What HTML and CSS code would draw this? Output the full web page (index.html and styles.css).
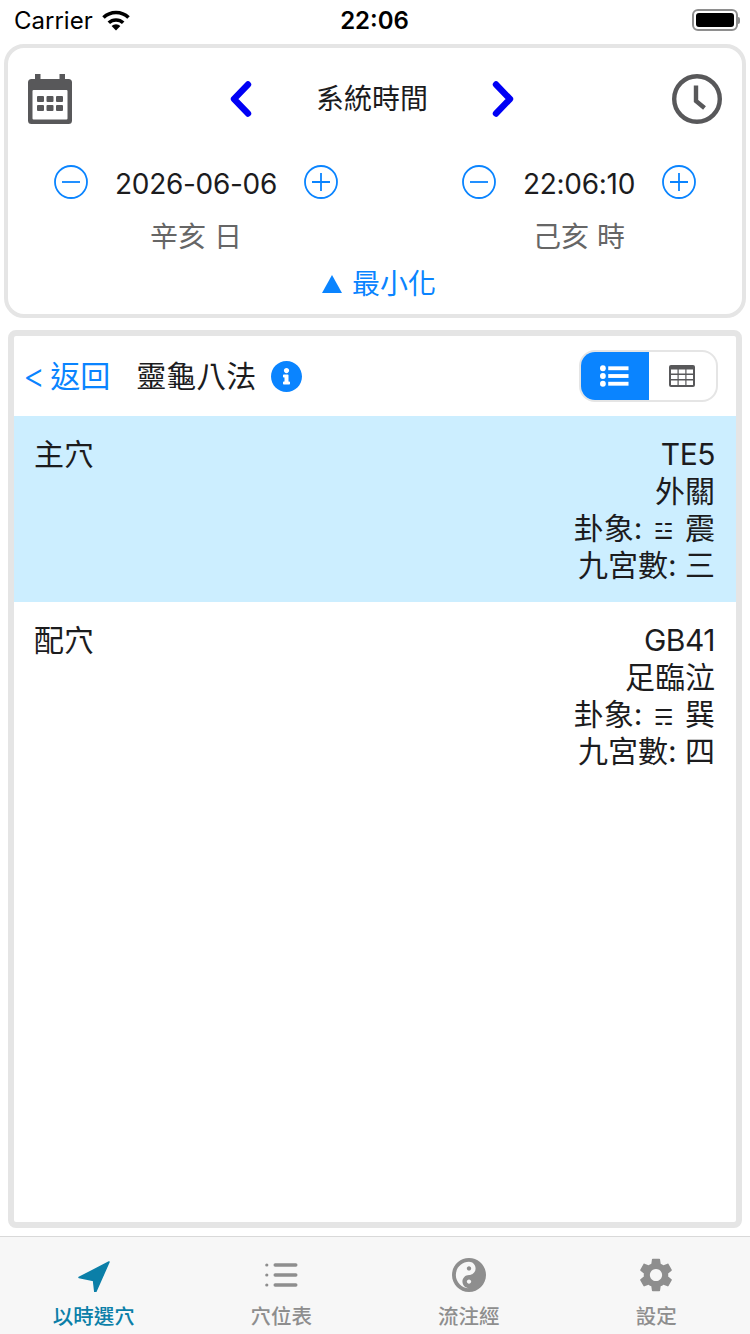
FILE: index.html
```html
<!DOCTYPE html>
<html lang="zh-Hant">
<head>
<meta charset="utf-8">
<title>靈龜八法</title>
<link rel="stylesheet" href="styles.css">
</head>
<body>
<div class="status">
  <div class="status-left">
    <span class="carrier">Carrier</span>
    <svg class="wifi" viewBox="0 0 30 22"><path class="wifi-arc" d="M2.500 8.500A18 18 0 0 1 27.500 8.500"/><path class="wifi-arc" d="M7.800 13.800A10.500 10.500 0 0 1 22.200 13.800"/><path d="M15 21.500 10.600 17A6.300 6.300 0 0 1 19.400 17z"/></svg>
  </div>
  <span class="clock-text">22:06</span>
  <div class="status-right">
    <span class="battery"><span class="battery-fill"></span></span><span class="battery-cap"></span>
  </div>
</div>

<section class="time-card">
  <div class="nav-row">
    <svg class="cal-icon" viewBox="0 0 44 50"><path class="ic-dark" d="M7 0h5.500v5h19V0H37v5h3.500A3.500 3.500 0 0 1 44 8.500V46.500A3.500 3.500 0 0 1 40.500 50H3.500A3.500 3.500 0 0 1 0 46.500V8.500A3.500 3.500 0 0 1 3.500 5H7z"/><rect class="ic-white" x="4.500" y="16" width="35" height="29.500" rx="1"/><g class="ic-dark"><rect x="9" y="22" width="7" height="6" rx="1"/><rect x="18.500" y="22" width="7" height="6" rx="1"/><rect x="28" y="22" width="7" height="6" rx="1"/><rect x="9" y="31" width="7" height="6" rx="1"/><rect x="18.500" y="31" width="7" height="6" rx="1"/><rect x="28" y="31" width="7" height="6" rx="1"/></g></svg>
    <div class="nav-center">
      <svg class="chev" viewBox="0 0 22 36"><path d="M18 3.500 4 18l14 14.500"/></svg>
      <span class="nav-title">系統時間</span>
      <svg class="chev" viewBox="0 0 22 36"><path d="M4 3.500 18 18 4 32.500"/></svg>
    </div>
    <svg class="clock-icon" viewBox="0 0 50 50"><circle cx="25" cy="25" r="22.800"/><path d="M24 11.500v15.500l8.500 7"/></svg>
  </div>

  <div class="date-row">
    <div class="date-block">
      <div class="stepper">
        <svg class="step" viewBox="0 0 34 34"><circle cx="17" cy="17" r="16"/><path d="M8 17h18"/></svg>
        <span class="step-val">2026-06-06</span>
        <svg class="step" viewBox="0 0 34 34"><circle cx="17" cy="17" r="16"/><path d="M8 17h18M17 8v18"/></svg>
      </div>
      <div class="ganzhi">辛亥 日</div>
    </div>
    <div class="date-block">
      <div class="stepper">
        <svg class="step" viewBox="0 0 34 34"><circle cx="17" cy="17" r="16"/><path d="M8 17h18"/></svg>
        <span class="step-val">22:06:10</span>
        <svg class="step" viewBox="0 0 34 34"><circle cx="17" cy="17" r="16"/><path d="M8 17h18M17 8v18"/></svg>
      </div>
      <div class="ganzhi">己亥 時</div>
    </div>
  </div>
  <div class="minimize"><span class="tri"></span>最小化</div>
</section>

<main class="result-card">
  <header class="result-head">
    <span class="back"><span class="lt">&lt;</span><span>返回</span></span>
    <h1 class="result-title">靈龜八法</h1>
    <svg class="info" viewBox="8 8 496 496"><path d="M256 8C119.043 8 8 119.083 8 256c0 136.997 111.043 248 248 248s248-111.003 248-248C504 119.083 392.957 8 256 8zm0 110c23.196 0 42 18.804 42 42s-18.804 42-42 42-42-18.804-42-42 18.804-42 42-42zm56 254c0 6.627-5.373 12-12 12h-88c-6.627 0-12-5.373-12-12v-24c0-6.627 5.373-12 12-12h12v-64h-12c-6.627 0-12-5.373-12-12v-24c0-6.627 5.373-12 12-12h64c6.627 0 12 5.373 12 12v100h12c6.627 0 12 5.373 12 12v24z"/></svg>
    <div class="segment">
      <div class="seg seg-on">
        <svg class="seg-list" viewBox="0 0 30 22"><g class="fill-white"><circle cx="3" cy="3" r="3"/><circle cx="3" cy="11" r="3"/><circle cx="3" cy="19" r="3"/><rect x="8.500" y="1" width="21" height="4"/><rect x="8.500" y="9" width="21" height="4"/><rect x="8.500" y="17" width="21" height="4"/></g></svg>
      </div>
      <div class="seg">
        <svg class="seg-table" viewBox="0 0 26 22"><rect x="0" y="0" width="26" height="22" rx="2" class="ic-dark"/><g class="ic-white"><rect x="2" y="4.500" width="6.500" height="4"/><rect x="9.700" y="4.500" width="6.600" height="4"/><rect x="17.500" y="4.500" width="6.500" height="4"/><rect x="2" y="10" width="6.500" height="4"/><rect x="9.700" y="10" width="6.600" height="4"/><rect x="17.500" y="10" width="6.500" height="4"/><rect x="2" y="15.500" width="6.500" height="4.500"/><rect x="9.700" y="15.500" width="6.600" height="4.500"/><rect x="17.500" y="15.500" width="6.500" height="4.500"/></g></svg>
      </div>
    </div>
  </header>
  <div class="row row-main">
    <div class="row-label">主穴</div>
    <div class="row-data">
      <div class="latin">TE5</div>
      <div>外關</div>
      <div>卦象: <span class="gua">☳</span> 震</div>
      <div>九宮數: 三</div>
    </div>
  </div>
  <div class="row">
    <div class="row-label">配穴</div>
    <div class="row-data">
      <div class="latin">GB41</div>
      <div>足臨泣</div>
      <div>卦象: <span class="gua">☴</span> 巽</div>
      <div>九宮數: 四</div>
    </div>
  </div>
</main>

<nav class="tabbar">
  <div class="tab tab-on">
    <svg class="tab-icon" viewBox="0 0 34 34"><path class="arrow" d="M32 4 2 19.500l14.500 3 1.500 13z"/></svg>
    <span class="tab-label">以時選穴</span>
  </div>
  <div class="tab">
    <svg class="tab-icon" viewBox="0 0 34 34"><g class="fill-gray"><circle cx="2.800" cy="7" r="1.600"/><circle cx="2.800" cy="17" r="1.600"/><circle cx="2.800" cy="27" r="1.600"/><rect x="9.500" y="5.300" width="24" height="3.400" rx="1.700"/><rect x="9.500" y="15.300" width="24" height="3.400" rx="1.700"/><rect x="9.500" y="25.300" width="24" height="3.400" rx="1.700"/></g></svg>
    <span class="tab-label">穴位表</span>
  </div>
  <div class="tab">
    <svg class="tab-icon" viewBox="0 0 496 496"><path class="fill-gray" d="M248 0C111.030 0 0 111.030 0 248s111.030 248 248 248 248-111.030 248-248S384.970 0 248 0zm0 376c-17.670 0-32-14.330-32-32s14.330-32 32-32 32 14.330 32 32-14.330 32-32 32zm0-128c-53.020 0-96 42.980-96 96s42.980 96 96 96c-106.040 0-192-85.960-192-192S141.960 56 248 56c53.020 0 96 42.980 96 96s-42.980 96-96 96zm0-128c-17.670 0-32 14.330-32 32s14.330 32 32 32 32-14.330 32-32-14.330-32-32-32z"/></svg>
    <span class="tab-label">流注經</span>
  </div>
  <div class="tab">
    <svg class="tab-icon" viewBox="2.500 2 19 20"><path class="fill-gray" d="M19.140 12.940c.04-.3.06-.61.06-.94 0-.32-.02-.64-.07-.94l2.030-1.580c.18-.14.23-.41.12-.61l-1.920-3.320c-.12-.22-.37-.29-.59-.22l-2.390.96c-.5-.38-1.030-.7-1.620-.94l-.36-2.540c-.04-.24-.24-.41-.48-.41h-3.840c-.24 0-.43.17-.47.41l-.36 2.540c-.59.24-1.130.57-1.620.94l-2.390-.96c-.22-.08-.47 0-.59.22L2.740 8.870c-.12.21-.08.47.12.61l2.030 1.580c-.05.3-.09.63-.09.94s.02.64.07.94l-2.030 1.580c-.18.14-.23.41-.12.61l1.920 3.320c.12.22.37.29.59.22l2.390-.96c.5.38 1.030.7 1.620.94l.36 2.540c.05.24.24.41.48.41h3.840c.24 0 .44-.17.47-.41l.36-2.540c.59-.24 1.130-.56 1.620-.94l2.390.96c.22.08.47 0 .59-.22l1.920-3.320c.12-.22.07-.47-.12-.61l-2.010-1.580zM12 15.600c-1.980 0-3.600-1.620-3.600-3.600s1.620-3.600 3.600-3.600 3.600 1.620 3.600 3.600-1.620 3.600-3.600 3.600z"/></svg>
    <span class="tab-label">設定</span>
  </div>
</nav>
</body>
</html>
```
FILE: styles.css
```css
* { box-sizing: border-box; }
html, body { margin: 0; padding: 0; }
body {
  width: 750px;
  height: 1334px;
  display: flex;
  flex-direction: column;
  background: #fff;
  color: #1c1c1e;
  font-family: Inter, "Noto Sans CJK TC", "DejaVu Sans", sans-serif;
  overflow: hidden;
}
.ic-dark { fill: #58585a; }
.ic-white { fill: #fff; }
.fill-white { fill: #fff; }
.fill-gray { fill: #8e8e8e; }

.status {
  height: 44px;
  flex: none;
  display: grid;
  grid-template-columns: 1fr auto 1fr;
  align-items: center;
  padding: 0 12px 4px 14px;
  color: #000;
}
.status-left { display: flex; align-items: center; gap: 8px; }
.carrier { font-size: 24px; }
.wifi { width: 30px; height: 22px; fill: #000; }
.wifi-arc { fill: none; stroke: #000; stroke-width: 3.600px; }
.clock-text { font-size: 24px; font-weight: 600; margin-left: -3px; }
.status-right { display: flex; justify-content: flex-end; align-items: center; }
.battery {
  width: 46px;
  height: 22px;
  border: 2px solid #8e8e8e;
  border-radius: 6px;
  padding: 2px;
  display: block;
}
.battery-fill { display: block; height: 100%; background: #000; border-radius: 3px; }
.battery-cap { width: 2px; height: 7px; background: #8e8e8e; border-radius: 0 2px 2px 0; margin-right: -2px; }

.time-card {
  flex: none;
  height: 274px;
  margin: 0 4px;
  border: 4px solid #e5e5e5;
  border-radius: 20px;
  padding-top: 26px;
  display: flex;
  flex-direction: column;
}
.nav-row {
  height: 50px;
  padding: 0 20px;
  display: flex;
  align-items: center;
  justify-content: space-between;
}
.cal-icon { width: 44px; height: 50px; }
.nav-center { display: flex; align-items: center; width: 284px; justify-content: space-between; }
.nav-title { font-size: 28px; line-height: 40px; }
.chev { width: 22px; height: 36px; }
.chev path { fill: none; stroke: #0000f5; stroke-width: 6.400px; stroke-linecap: round; stroke-linejoin: round; }
.clock-icon { width: 50px; height: 50px; }
.clock-icon circle, .clock-icon path { fill: none; stroke: #58585a; stroke-width: 4.400px; }
.clock-icon path { stroke-linecap: butt; }

.date-row {
  margin-top: 41px;
  padding: 0 46px;
  display: flex;
  justify-content: space-between;
}
.date-block { display: flex; flex-direction: column; align-items: center; }
.stepper { display: flex; align-items: center; gap: 27px; height: 34px; }
.step { width: 34px; height: 34px; flex: none; }
.step circle, .step path { fill: none; stroke: #0a84ff; stroke-width: 1.800px; }
.step-val { font-size: 28px; line-height: 38px; margin-top: 4px; letter-spacing: -0.3px; color: #1c1c1e; }
.ganzhi { margin-top: 18px; font-size: 28px; line-height: 40px; color: #666; }
.minimize {
  margin-top: 7px;
  padding-left: 8px;
  font-size: 28px;
  line-height: 40px;
  color: #0a84ff;
  display: flex;
  justify-content: center;
  align-items: center;
  gap: 10px;
}
.tri {
  width: 0;
  height: 0;
  border-left: 10.500px solid transparent;
  border-right: 10.500px solid transparent;
  border-bottom: 18px solid #0a84ff;
}

.result-card {
  flex: none;
  height: 898px;
  margin: 12px 8px 0;
  border: 6px solid #e5e5e5;
  border-radius: 8px;
  display: flex;
  flex-direction: column;
}
.result-head {
  height: 80px;
  flex: none;
  padding: 0 18px 0 9px;
  display: flex;
  align-items: center;
}
.back { font-size: 30px; color: #0a84ff; line-height: 40px; display: flex; align-items: center; gap: 5px; }
.lt { font-size: 34px; font-weight: 300; line-height: 40px; }
.result-title { margin: 0 0 0 26px; font-size: 30px; font-weight: 400; line-height: 40px; }
.info { width: 31px; height: 31px; margin-left: 15px; fill: #0a84ff; }
.segment {
  margin-left: auto;
  width: 139px;
  height: 52px;
  border: 2px solid #e5e5e5;
  border-radius: 16px;
  display: flex;
  overflow: hidden;
}
.seg { flex: 1; display: flex; align-items: center; justify-content: center; }
.seg-on { background: #0a84ff; }
.seg-list { width: 29px; height: 22px; }
.seg-table { width: 26px; height: 22px; }

.row {
  height: 186px;
  padding: 20px 21px 0 20px;
  display: flex;
  justify-content: space-between;
  font-size: 30px;
  line-height: 37px;
}
.row-main { background: #cceeff; }
.row-data { text-align: right; }
.latin { letter-spacing: -0.5px; }
.gua { font-family: "DejaVu Sans", sans-serif; font-size: 22px; line-height: 0; margin: 0 3px; }

.tabbar {
  flex: none;
  margin-top: 8px;
  height: 98px;
  border-top: 1px solid #d9d9d9;
  background: #f7f7f7;
  display: grid;
  grid-template-columns: repeat(4, 1fr);
}
.tab {
  display: flex;
  flex-direction: column;
  align-items: center;
  padding-top: 21px;
  color: #8e8e8e;
}
.tab-icon { width: 34px; height: 34px; flex: none; }
.tab-label { margin-top: 11px; font-size: 20.500px; font-weight: 500; line-height: 28px; }
.tab-on { color: #0b7fa8; }
.arrow { fill: #0b7fa8; stroke: #0b7fa8; stroke-width: 1.500px; stroke-linejoin: round; }
```
